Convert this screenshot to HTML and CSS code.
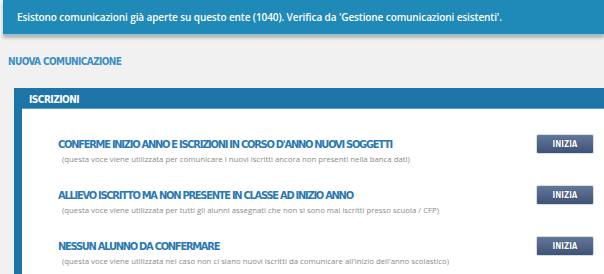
FILE: index.html
```
<!DOCTYPE html>
<html>
<head>
  <link rel="stylesheet" href="styles.css">
</head>
<body>
  <div class="avviso">Esistono comunicazioni già aperte su questo ente (1040). Verifica da 'Gestione comunicazioni esistenti'.</div>
  <h2 class="titolo">NUOVA COMUNICAZIONE</h2>
  <div class="pannello">
    <div class="pannello-testa">ISCRIZIONI</div>
    <div class="pannello-corpo">
      <div class="voce">
        <div class="voce-testo">
          <div class="voce-titolo">CONFERME INIZIO ANNO E ISCRIZIONI IN CORSO D'ANNO NUOVI SOGGETTI</div>
          <div class="voce-nota">(questa voce viene utilizzata per comunicare i nuovi iscritti ancora non presenti nella banca dati)</div>
        </div>
        <button class="inizia">INIZIA</button>
      </div>
      <div class="voce">
        <div class="voce-testo">
          <div class="voce-titolo">ALLIEVO ISCRITTO MA NON PRESENTE IN CLASSE AD INIZIO ANNO</div>
          <div class="voce-nota">(questa voce viene utilizzata per tutti gli alunni assegnati che non si sono mai iscritti presso scuola / CFP)</div>
        </div>
        <button class="inizia">INIZIA</button>
      </div>
      <div class="voce">
        <div class="voce-testo">
          <div class="voce-titolo">NESSUN ALUNNO DA CONFERMARE</div>
          <div class="voce-nota">(questa voce viene utilizzata nel caso non ci siano nuovi iscritti da comunicare all'inizio dell'anno scolastico)</div>
        </div>
        <button class="inizia">INIZIA</button>
      </div>
    </div>
  </div>
</body>
</html>
```

FILE: styles.css
```
body {
  margin: 0;
  padding: 0;
  background-color: #f1f1f1;
  font-family: "Open Sans", "DejaVu Sans", sans-serif;
  overflow: hidden;
}

.avviso {
  margin-left: 3px;
  height: 35px;
  box-sizing: border-box;
  padding: 10px 0 0 14px;
  background-color: #1f8ab8;
  border-bottom: 1px solid #8fc6df;
  box-shadow: 0 3px 3px rgba(0, 0, 0, 0.25);
  color: #ffffff;
  font-size: 10px;
  font-weight: 600;
  letter-spacing: -0.1px;
}

.titolo {
  margin: 21px 0 0 8px;
  font-family: "DejaVu Sans Condensed", "DejaVu Sans", sans-serif;
  font-size: 10px;
  font-weight: bold;
  color: #3b8ec3;
  letter-spacing: -0.6px;
}

.pannello {
  margin: 21px 0 0 14px;
  border-left: 8px solid #1d74a7;
  background-color: #ffffff;
}

.pannello-testa {
  height: 21px;
  box-sizing: border-box;
  padding: 6px 0 0 7px;
  background-color: #1d74a7;
  border-bottom: 1px solid #5ba3cb;
  color: #ffffff;
  font-family: "DejaVu Sans Condensed", "DejaVu Sans", sans-serif;
  font-size: 10px;
  font-weight: bold;
  letter-spacing: -0.5px;
}

.pannello-corpo {
  padding: 25px 0 0 36px;
}

.voce {
  display: flex;
  align-items: flex-start;
  height: 51px;
}

.voce-testo {
  flex-grow: 1;
  padding-top: 4px;
}

.voce-titolo {
  font-family: "DejaVu Sans Condensed", "DejaVu Sans", sans-serif;
  font-size: 11px;
  font-weight: bold;
  color: #2b79b3;
  letter-spacing: -1.25px;
}

.voce-nota {
  margin: 3px 0 0 4px;
  font-size: 7.8px;
  color: #8a8a8a;
}

.inizia {
  width: 58px;
  height: 20px;
  margin-right: 10px;
  border: 1px solid #d8dde4;
  border-radius: 2px;
  background: linear-gradient(#62789a, #3e5276);
  color: #ffffff;
  font-family: "DejaVu Sans Condensed", "DejaVu Sans", sans-serif;
  font-size: 8px;
  font-weight: bold;
  padding: 0;
  text-shadow: 0 0 1px #1c2a44;
  cursor: pointer;
}
```
